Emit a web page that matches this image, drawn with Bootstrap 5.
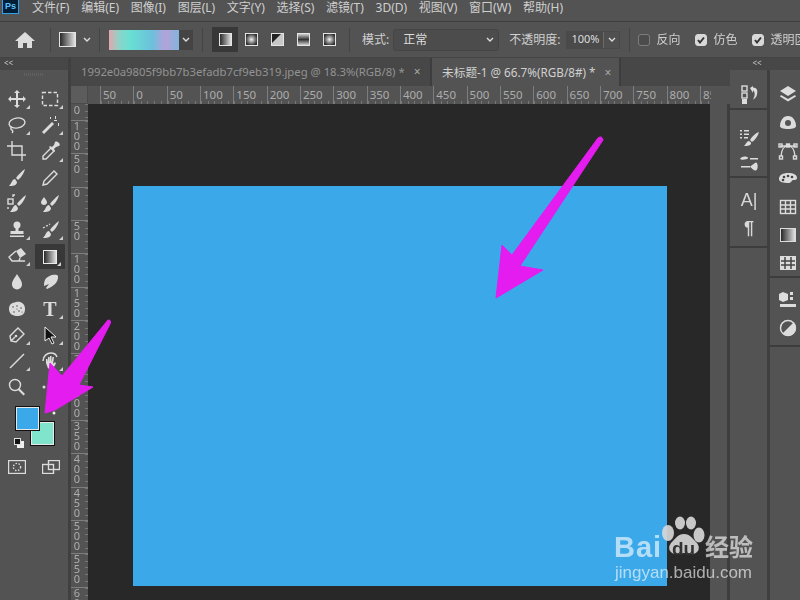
<!DOCTYPE html>
<html lang="zh-CN">
<head>
    <meta charset="UTF-8">
    <meta name="viewport" content="width=device-width, initial-scale=1.0">
    <title>Photoshop</title>
    <link rel="stylesheet" href="https://cdn.jsdelivr.net/npm/bootstrap@5.3.0/dist/css/bootstrap.min.css">
    <style>
        html, body { width: 800px; height: 600px; overflow: hidden; }
        body { background: #535353; color: #cfcfcf; font-family: "Noto Sans", "Noto Sans CJK SC", sans-serif; font-size: 12px; }
        .ps-app { position: relative; width: 800px; height: 600px; overflow: hidden; filter: blur(.4px); }

        /* menu bar */
        .ps-menu { height: 22px; flex: none; background: #535353; border-bottom: 1px solid #3d3d3d; padding-bottom: 5px; }
        .ps-logo { width: 17px; height: 14px; margin: 0 13px 2px 2px; align-self: flex-start; background: #001e36; border: 1px solid #2f9fe8; border-top: 0; color: #5cc0ff; font: bold 9px/12px "Liberation Sans", sans-serif; text-align: center; }
        .ps-menu a { color: #cfcfcf; text-decoration: none; font-size: 12px; line-height: 14px; margin-right: 11.7px; white-space: nowrap; }

        /* options bar */
        .ps-options { height: 36px; flex: none; background: #535353; border-bottom: 1px solid #444; white-space: nowrap; }
        .ps-options > * { flex: none; }
        .sp-4 { margin-left: 4px; }
        .sp-6 { margin-left: 6px; }
        .sp-7 { margin-left: 7px; }
        .sp-8 { margin-left: 8px; }
        .sp-9 { margin-left: 9px; }
        .sp-10 { margin-left: 10px; }
        .sp-12 { margin-left: 12px; }
        .sp-15 { margin-left: 15px; }
        .opt-sep { width: 1px; height: 24px; background: #444; }
        .opt-btn { width: 26px; height: 25px; }
        .opt-btn.active { background: #383838; }
        .gradient-pick { width: 70px; height: 20px; background: linear-gradient(90deg, #e2a8ae 0, #8cd4c8 15%, #68e0d2 30%, #6cc0dc 62%, #b4a2da 80%, #82b4dc 100%); }
        .gradient-drop { width: 14px; height: 20px; background: #444; }
        .opt-select { width: 106px; height: 22px; border: 1px solid #454545; border-radius: 3px; background: #4c4c4c; padding-left: 9px; color: #ddd; }
        .opt-input { width: 54px; height: 18px; border: 1px solid #4a4a4a; background: #4a4a4a; color: #ddd; font-size: 11px; }
        .opt-input-drop { width: 16px; height: 16px; border-left: 1px solid #6a6a6a; background: #505050; }
        .opt-check { width: 12px; height: 12px; margin-top: 0; border: 1px solid #7c7c7c; background-color: #4c4c4c; border-radius: 2px; }
        .opt-check:checked { background-color: #d8d8d8; border-color: #d8d8d8; background-image: url("data:image/svg+xml,%3csvg xmlns='http://www.w3.org/2000/svg' viewBox='0 0 20 20'%3e%3cpath fill='none' stroke='%23333' stroke-width='4' d='M4 10l4 5 8-10'/%3e%3c/svg%3e"); }

        /* side panels */
        .side-head { height: 12px; background: #474747; color: #ccc; font-size: 8px; line-height: 10px; }
        .ps-grip { height: 3px; width: 20px; margin: 3px auto 0; background: repeating-linear-gradient(90deg, #606060 0 1px, transparent 1px 2px); }
        .ps-tools { width: 71px; flex: none; background: #535353; border-right: 3px solid #404040; }
        .tool-grid { display: grid; grid-template-columns: 33.5px 33.5px; grid-auto-rows: 26.2px; padding-top: 10px; }
        .tool-cell { position: relative; display: flex; align-items: center; justify-content: center; }
        .tool-cell.active { background: #383838; border-radius: 1px; margin: 1px 2px 0 1px; }
        .tool-cell.fly::after { content: ""; position: absolute; right: 4px; bottom: 3px; border: 2px solid transparent; border-right-color: #cfcfcf; border-bottom-color: #cfcfcf; }
        .tool-svg { width: 20px; height: 20px; fill: #dcdcdc; stroke: none; }
        .line-ic { fill: none; stroke: #dcdcdc; stroke-width: 1.4; }
        .swatch-area { height: 54px; margin-top: 6px; position: relative; }
        .swatch { position: absolute; border: 1px solid #111; outline: 1px solid #e8e8e8; outline-offset: -2px; }
        .swatch-fg { left: 15px; top: 0; width: 25px; height: 25px; background: #3ba8e9; z-index: 1; }
        .swatch-bg { left: 30px; top: 15px; width: 25px; height: 25px; background: #80e4cd; }
        .mini-fg, .mini-bg { position: absolute; width: 7px; height: 7px; }
        .mini-bg { left: 17px; top: 35px; background: #eee; }
        .mini-fg { left: 14px; top: 32px; background: #111; border: 1px solid #ddd; }

        /* document */
        .ps-doc { width: 659px; flex: none; }
        .doc-tabs { height: 28px; background: #474747; flex-wrap: nowrap; padding-left: 0; }
        .doc-tabs .nav-link { color: #939393; font-size: 11.3px; height: 28px; line-height: 16px; padding: 6px 0 0 10px; white-space: nowrap; border-right: 2px solid #3d3d3d; }
        .doc-tabs .nav-link.active { color: #d0d0d0; background: #535353; font-size: 11.7px; }
        .tab-one { width: 361px; }
        .tab-two { width: 189px; }
        .tab-x { color: #a8a8a8; margin-left: 9px; font-size: 12px; }
        .ruler-h { height: 18px; width: 640px; background: #535353; overflow: hidden; }
        .ruler-corner { width: 17px; flex: none; background: #5c5c5c; border-right: 1px solid #4a4a4a; border-bottom: 1px solid #4a4a4a; }
        .ruler-lead { width: 12px; flex: none; }
        .tick-h { width: 33.33px; flex: none; border-left: 1px solid #7d7d7d; padding-left: 2px; font-size: 11.5px; line-height: 18px; color: #acacac; background: repeating-linear-gradient(90deg, #777 0 1px, transparent 1px 6.667px) bottom left / 100% 3px no-repeat; }
        .ruler-v { width: 17px; height: 496px; flex: none; background: #535353; overflow: hidden; }
        .tick-v { height: 33.33px; border-top: 1px solid #7d7d7d; padding-left: 1px; font-size: 11px; line-height: 10px; color: #acacac; width: 17px; background: repeating-linear-gradient(180deg, #777 0 1px, transparent 1px 6.667px) top right / 3px 100% no-repeat; }
        .tick-v span { display: block; width: 10px; text-align: center; word-break: break-all; }
        .tick-first { height: 16px; border-top: 0; padding-top: 1px; }
        .doc-canvas { width: 622px; height: 496px; background: #282828; padding: 82px 0 0 45px; flex: none; }
        .art-board { width: 534px; height: 400px; background: #3ba8e9; }
        .doc-scroll { width: 20px; flex: none; border-right: 3px solid #3d3d3d; }

        /* dock */
        .ps-dock { width: 70px; flex: none; }
        .dock-col1 { width: 40px; flex: none; border-right: 3px solid #3f3f3f; min-height: 530px; }
        .dock-col2 { width: 30px; flex: none; min-height: 530px; }
        .dock-group { border-bottom: 2px solid #3d3d3d; padding-top: 11px; }
        .dock-group.tight { padding-top: 8px; }
        .dock-item { display: flex; align-items: center; justify-content: center; height: 28px; padding-left: 1px; }
        .dock-col2 .dock-item { padding-left: 6px; }
        .dock-glyph { font: 18px/20px "Liberation Sans", sans-serif; color: #d8d8d8; }

        /* overlays */
        .arrow-layer { position: absolute; left: 0; top: 0; width: 800px; height: 600px; pointer-events: none; }
        .wm { position: absolute; left: 614px; top: 515px; width: 160px; height: 70px; pointer-events: none; color: rgba(255, 255, 255, .62); }
        .wm-bai { position: absolute; left: 0; top: 14px; font: bold 29px/36px "Liberation Sans", sans-serif; letter-spacing: 1px; }
        .wm-du { position: absolute; left: 58px; top: 22px; font: bold 19px/24px "Liberation Sans", sans-serif; color: #333; }
        .wm-jing { position: absolute; left: 91px; top: 16px; font: bold 24px/30px "Noto Sans CJK SC", sans-serif; }
        .wm-url { position: absolute; left: 1px; top: 48px; font: 17px/20px "Liberation Sans", sans-serif; }
    </style>
</head>
<body>
<div class="ps-app d-flex flex-column">

    <!-- menu bar -->
    <div class="ps-menu d-flex align-items-center">
        <div class="ps-logo">Ps</div>
        <a href="#">文件(F)</a><a href="#">编辑(E)</a><a href="#">图像(I)</a><a href="#">图层(L)</a><a href="#">文字(Y)</a><a href="#">选择(S)</a><a href="#">滤镜(T)</a><a href="#">3D(D)</a><a href="#">视图(V)</a><a href="#">窗口(W)</a><a href="#">帮助(H)</a>
    </div>

    <!-- options bar -->
    <div class="ps-options d-flex align-items-center">
        <svg class="tool-svg sp-15" viewBox="0 0 20 20"><path d="M10 2L0 11h3v7h5v-5h4v5h5v-7h3z"/></svg>
        <div class="opt-sep sp-15"></div>
        <svg class="sp-8" width="17" height="15" viewBox="0 0 17 15"><rect x=".5" y=".5" width="16" height="14" fill="url(#gradLr)" stroke="#e4e4e4"/></svg>
        <svg class="sp-7" width="8" height="6" viewBox="0 0 8 6"><path d="M1 1l3 3 3-3" class="line-ic"/></svg>
        <div class="opt-sep sp-8"></div>
        <div class="d-flex sp-9 align-items-center">
            <div class="gradient-pick"></div>
            <div class="gradient-drop d-flex align-items-center justify-content-center"><svg width="8" height="6" viewBox="0 0 8 6"><path d="M1 1l3 3 3-3" class="line-ic"/></svg></div>
        </div>
        <div class="opt-sep sp-9"></div>
        <div class="opt-btn active d-flex align-items-center justify-content-center sp-9"><svg width="13" height="13" viewBox="0 0 13 13"><rect x=".5" y=".5" width="12" height="12" fill="url(#gradLr)" stroke="#e4e4e4"/></svg></div>
        <div class="opt-btn d-flex align-items-center justify-content-center"><svg width="13" height="13" viewBox="0 0 13 13"><rect x=".5" y=".5" width="12" height="12" fill="url(#gradRad)" stroke="#e4e4e4"/></svg></div>
        <div class="opt-btn d-flex align-items-center justify-content-center"><svg width="13" height="13" viewBox="0 0 13 13"><rect x=".5" y=".5" width="12" height="12" fill="#c8c8c8" stroke="#e4e4e4"/><path d="M1 1h9L1 10z" fill="#222"/></svg></div>
        <div class="opt-btn d-flex align-items-center justify-content-center"><svg width="13" height="13" viewBox="0 0 13 13"><rect x=".5" y=".5" width="12" height="12" fill="url(#gradRef)" stroke="#e4e4e4"/></svg></div>
        <div class="opt-btn d-flex align-items-center justify-content-center"><svg width="13" height="13" viewBox="0 0 13 13"><rect x=".5" y=".5" width="12" height="12" fill="url(#gradRad)" stroke="#e4e4e4"/></svg></div>
        <div class="opt-sep sp-7"></div>
        <span class="sp-12">模式:</span>
        <div class="opt-select d-flex align-items-center justify-content-between sp-4"><span>正常</span><svg class="me-1" width="8" height="6" viewBox="0 0 8 6"><path d="M1 1l3 3 3-3" class="line-ic"/></svg></div>
        <span class="sp-10">不透明度:</span>
        <div class="opt-input d-flex align-items-center justify-content-between sp-6"><span class="ps-1">100%</span><div class="opt-input-drop d-flex align-items-center justify-content-center"><svg width="8" height="6" viewBox="0 0 8 6"><path d="M1 1l3 3 3-3" class="line-ic"/></svg></div></div>
        <div class="opt-sep sp-9"></div>
        <input class="form-check-input opt-check sp-8" type="checkbox"><span class="sp-6">反向</span>
        <input class="form-check-input opt-check sp-15" type="checkbox" checked><span class="sp-6">仿色</span>
        <input class="form-check-input opt-check sp-15" type="checkbox" checked><span class="sp-6">透明区域</span>
    </div>

    <div class="d-flex flex-grow-1">

        <!-- tools -->
        <div class="ps-tools">
            <div class="side-head ps-1">&lt;&lt;</div>
            <div class="ps-grip"></div>
            <div class="tool-grid" id="toolGrid"></div>
            <div class="swatch-area">
                <div class="swatch swatch-fg"></div>
                <div class="swatch swatch-bg"></div>
                <div class="mini-bg"></div>
                <div class="mini-fg"></div>
            </div>
            <div class="d-flex">
                <svg class="ms-2" width="18" height="14" viewBox="0 0 18 14"><rect x=".5" y=".5" width="17" height="13" class="line-ic" stroke-width="1"/><circle cx="9" cy="7" r="3.6" class="line-ic" stroke-dasharray="1.5 1.5"/></svg>
                <svg class="ms-3" width="18" height="14" viewBox="0 0 18 14"><rect x=".5" y="4.5" width="11" height="9" class="line-ic"/><rect x="6.5" y=".5" width="11" height="9" fill="#535353" class="line-ic"/></svg>
            </div>
        </div>

        <!-- document -->
        <div class="ps-doc">
            <ul class="nav doc-tabs">
                <li class="nav-item"><a class="nav-link tab-one" href="#">1992e0a9805f9bb7b3efadb7cf9eb319.jpeg @ 18.3%(RGB/8) *<span class="tab-x">×</span></a></li>
                <li class="nav-item"><a class="nav-link tab-two active" href="#">未标题-1 @ 66.7%(RGB/8#) *<span class="tab-x">×</span></a></li>
            </ul>
            <div class="d-flex ruler-h" id="rulerH"><div class="ruler-corner"></div><div class="ruler-lead"></div></div>
            <div class="d-flex">
                <div class="ruler-v" id="rulerV"></div>
                <div class="doc-canvas"><div class="art-board"></div></div>
                <div class="doc-scroll"></div>
            </div>
        </div>

        <!-- dock -->
        <div class="ps-dock">
            <div class="side-head text-center pe-3">&lt;&lt;</div>
            <div class="d-flex">
                <div class="dock-col1">
                    <div class="dock-group" style="height:40px">
                        <div class="dock-item"><svg class="tool-svg" viewBox="0 0 20 20"><rect x="3" y="1" width="5" height="5" class="line-ic"/><rect x="3" y="8" width="5" height="5" class="line-ic"/><rect x="3" y="14" width="5" height="5"/><path d="M11 3l3-2v1.500c4 0 5 3 4 7-.5 2.500-2 4-4 5 1.500-3 2.500-6 1-8-.3-.5-.6-.8-1-.9V8z"/></svg></div>
                    </div>
                    <div class="dock-group" style="height:68px">
                        <div class="dock-item pt-1"><svg class="tool-svg" viewBox="0 0 20 20"><path d="M1 3h2v1.500H1zM1 6.500h2V8H1zM1 10h2v1.500H1zM5 3h5v1.500H5zM5 6.500h5V8H5zM5 10h4v1.500H5zM20 5c-3 1-7 4-9 8l2 2c3-2 6-6 7-10zM10 14c-2 0-3 3-5 5 3 0 8-.5 7-3.500z"/></svg></div>
                        <div class="dock-item"><svg class="tool-svg" viewBox="0 0 20 20"><path d="M1 6c1-2 4-3 7-2 2 .5 1 1.500 0 2-3 1-6 1-7 0zM11 5h8v1.500h-8zM2 13h9v1.500H2zM11 13.500c2-1 5-4 6-4 2 0 2.500 7 0 8-2 .5-4-2-6-4z"/></svg></div>
                    </div>
                    <div class="dock-group tight" style="height:70px">
                        <div class="dock-item dock-glyph">A<span class="fw-light">|</span></div>
                        <div class="dock-item dock-glyph fw-bold">¶</div>
                    </div>
                </div>
                <div class="dock-col2">
                    <div class="dock-group" style="height:208px">
                        <div class="dock-item"><svg class="tool-svg" viewBox="0 0 20 20"><path d="M10 1l8 5-8 5-8-5zM3 10l7 4 7-4 1 1.500-8 5-8-5z"/></svg></div>
                        <div class="dock-item"><svg class="tool-svg" viewBox="0 0 20 20"><path d="M10 3c5 0 8 5 8 10 0 2-3 3-8 3s-8-1-8-3c0-5 3-10 8-10z"/><circle cx="10" cy="10" r="3" fill="#555"/></svg></div>
                        <div class="dock-item"><svg class="tool-svg line-ic" viewBox="0 0 20 20"><path d="M3 15C4 6 7 5 10 5s6 1 7 10M2 5h16"/><rect x="1" y="3" width="3" height="3"/><rect x="16" y="3" width="3" height="3"/><rect x="8.500" y="3" width="3" height="3" fill="#dcdcdc"/><rect x="1.500" y="15" width="3" height="3"/><rect x="15.500" y="15" width="3" height="3"/></svg></div>
                        <div class="dock-item"><svg class="tool-svg" viewBox="0 0 20 20"><path d="M10 4c6 0 9 2 9 5 0 2-2 2-4 2-1.500 0-1.500 3-4 3-6 0-10-1-10-4 0-4 4-6 9-6z"/><circle cx="6" cy="8" r="1.300" fill="#444"/><circle cx="10" cy="7" r="1.300" fill="#444"/><circle cx="14" cy="8" r="1.300" fill="#444"/><circle cx="5" cy="11" r="1.300" fill="#444"/></svg></div>
                        <div class="dock-item"><svg class="tool-svg line-ic" viewBox="0 0 20 20"><rect x="2.500" y="3.500" width="15" height="13"/><path d="M2.500 8h15M2.500 12h15M7.500 3.500v13M12.500 3.500v13"/></svg></div>
                        <div class="dock-item"><svg class="tool-svg" viewBox="0 0 20 20"><rect x="2.500" y="3.500" width="15" height="13" fill="url(#gradLr)" stroke="#dcdcdc"/></svg></div>
                        <div class="dock-item"><svg class="tool-svg" viewBox="0 0 20 20"><rect x="2" y="3" width="16" height="14"/><path d="M7 4v12M13 4v12M3 8h14M3 12h14" stroke="#444" stroke-width="1.500"/></svg></div>
                    </div>
                    <div class="dock-group tight" style="height:69px">
                        <div class="dock-item"><svg class="tool-svg" viewBox="0 0 20 20"><path d="M5 2l5 2v6l-5 2-4-2V4zM12 2h3v3h-3zM12 7h3v3h-3zM2 14h16v3H2z"/></svg></div>
                        <div class="dock-item"><svg class="tool-svg" viewBox="0 0 20 20"><circle cx="10" cy="10" r="8"/><path d="M4 16L16 4c-3-3-8-3-11 0-3 3-3 9-1 12z" fill="#535353"/><circle cx="10" cy="10" r="7.500" class="line-ic"/></svg></div>
                    </div>
                </div>
            </div>
        </div>
    </div>

    <!-- pink arrows drawn over the screenshot -->
    <svg class="arrow-layer" viewBox="0 0 800 600">
        <defs>
            <linearGradient id="gradLr"><stop offset="0" stop-color="#222"/><stop offset="1" stop-color="#e8e8e8"/></linearGradient>
            <linearGradient id="gradRef" x2="0" y2="1"><stop offset="0" stop-color="#ddd"/><stop offset=".5" stop-color="#333"/><stop offset="1" stop-color="#ddd"/></linearGradient>
            <radialGradient id="gradRad"><stop offset="0" stop-color="#f0f0f0"/><stop offset="1" stop-color="#333"/></radialGradient>
        </defs>
        <path fill="#e41cf0" stroke="#e41cf0" stroke-linejoin="round" d="M496 298L502 245 512 255 598 138Q602 135 603 140L520 266 543 270z"/>
        <path fill="#e41cf0" stroke="#e41cf0" stroke-linejoin="round" d="M45 413L50 363 62 376 108 320Q112 320 110 324L79 385 93 387 55 410z"/>
        <circle cx="54" cy="413" r="1.500" fill="#eee"/>
    </svg>

    <!-- watermark -->
    <div class="wm">
        <div class="wm-bai">Bai</div>
        <svg class="position-absolute top-0 start-0" width="160" height="50" viewBox="0 0 160 50">
            <g fill="#d8d8d8" fill-opacity=".9">
                <ellipse cx="54" cy="18" rx="6" ry="8"/>
                <ellipse cx="66" cy="8" rx="5" ry="6.500"/>
                <ellipse cx="77" cy="8" rx="5" ry="6.500"/>
                <ellipse cx="85" cy="20" rx="5.500" ry="7.500"/>
                <path d="M70 19c6 0 9 5 13 9 4 5 1 11-5 11-3 0-5-1-8-1s-5 1-8 1c-6 0-9-6-5-11 4-4 7-9 13-9z"/>
            </g>
        </svg>
        <div class="wm-du">du</div>
        <div class="wm-jing">经验</div>
        <div class="wm-url">jingyan.baidu.com</div>
    </div>
</div>

<script>
    const brush = '<path d="M18 1c-3 2-7 6-9 9l2 2c3-2 6-7 7-11zM8 11c-3 0-3 4-6 7 3 0 8 0 8-4z"/>';
    const tools = [
        ['<path d="M10 1l3 3h-2v5h5V7l3 3-3 3v-2h-5v5h2l-3 3-3-3h2v-5H4v2l-3-3 3-3v2h5V4H7z"/>', 1],
        ['<rect x="2.500" y="3.500" width="15" height="13" class="line-ic" stroke-dasharray="3.500 2"/>', 1],
        ['<g class="line-ic"><ellipse cx="10" cy="8" rx="8" ry="5" transform="rotate(-10 10 8)"/><path d="M5 12c-2 1-1 3 0 3s1 2 0 3"/></g>', 1],
        ['<path d="M2 17L12 7l2 2L4 19z"/><path d="M15 1h1v3h-1zM14 5h3v1h-3zM18 8h1v3h-1zM10 2h1v2h-1z"/>', 1],
        ['<path class="line-ic" stroke-width="2" d="M5 0v14h14M0 5h15v15"/>', 0],
        ['<path class="line-ic" d="M11 7L3 15v3h3l8-8z"/><path d="M12 6l2-2 1-3c1-1 3 0 4 1 1 1 1 2 0 3l-3 1-2 2 1 2-1 1-5-5 1-1z"/>', 1],
        [brush, 0],
        ['<path class="line-ic" d="M14 3l3 3L7 16l-4 1 1-4z"/>', 0],
        ['<g transform="translate(1 0)">' + brush + '</g><rect x="1" y="5" width="5" height="5" class="line-ic"/><path class="line-ic" d="M8 1h-2v2M1 13v2"/>', 0],
        ['<g transform="translate(1 0)">' + brush + '</g><path d="M4 3c2 3 3 4 3 5.500S5.500 11 4 11 1 10 1 8.500 2 6 4 3z"/>', 0],
        ['<circle cx="10" cy="5" r="3.500"/><path d="M8.500 8h3v3h5v3h-13v-3h5zM3 15.500h14V17H3z"/>', 1],
        ['<g transform="translate(1 0)">' + brush + '</g><path class="line-ic" stroke-dasharray="2 1.500" d="M3 8l7-4"/>', 1],
        ['<path d="M9 5l5-3 5 6-6 4z"/><path class="line-ic" d="M9 5l-7 6 3 4h7l1-3M5 15h13"/>', 1],
        ['<rect x="3.500" y="3.500" width="13" height="13" fill="url(#gradLr)" stroke="#ececec"/>', 1],
        ['<path d="M10 2c3 5 5 7 5 10.500A5 5 0 0 1 5 12.500C5 9 7 7 10 2z"/>', 0],
        ['<path d="M5 8c2-4 8-6 12-5 2 1 1 5-1 8-3 3-5 4-9 6l-1-1 3-4-5 2c0-2 0-4 1-6z"/>', 0],
        ['<path d="M9 3c4-1 9 1 9 7s-4 7-8 7-8-2-8-7 3-6 7-7z"/><g fill="#555"><circle cx="6" cy="8" r=".8"/><circle cx="10" cy="7" r=".8"/><circle cx="14" cy="9" r=".8"/><circle cx="7" cy="13" r=".8"/><circle cx="12" cy="12" r=".8"/><circle cx="10" cy="10" r=".6"/><circle cx="15" cy="13" r=".6"/></g>', 0],
        ['<text x="10" y="17" text-anchor="middle" font-family="Liberation Serif, serif" font-weight="bold" font-size="20">T</text>', 1],
        ['<path class="line-ic" d="M4 16l-1-5 8-8 6 6-8 8zM4 16l4-4"/><circle cx="9" cy="11" r="1.300"/>', 1],
        ['<path d="M5 2l0 14 4-3 3 6 2-1-3-6 5 0z" fill="#111" stroke="#eee"/>', 1],
        ['<path class="line-ic" d="M3 17L17 3"/>', 1],
        ['<path d="M6 12V8l1.500 0 .5 3V6h1.500v5l.5-6h1.500l0 6 1-5h1.500l-1 7 2-2 1 1.500-3 5H8z"/><path class="line-ic" d="M3 10C3 5 7 2 11 2c3 0 5 1 6 4"/>', 1],
        ['<circle cx="8" cy="8" r="5.500" class="line-ic" stroke-width="1.800"/><path d="M12 11l6 6-1.500 1.500-6-6z"/>', 0],
        ['<circle cx="4" cy="10" r="1.500"/><circle cx="10" cy="10" r="1.500"/><circle cx="16" cy="10" r="1.500"/>', 0]
    ];

    // tool buttons, two columns
    let toolHtml = "";
    tools.forEach((tool, i) => {
        toolHtml += `<div class="tool-cell ${tool[1] ? "fly" : ""} ${i === 13 ? "active" : ""}"><svg class="tool-svg" viewBox="0 0 20 20">${tool[0]}</svg></div>`;
    });
    document.getElementById("toolGrid").innerHTML = toolHtml;

    // horizontal ruler
    let rulerH = "";
    for (let n = -50; n <= 850; n += 50) {
        rulerH += `<div class="tick-h">${Math.abs(n)}</div>`;
    }
    document.getElementById("rulerH").insertAdjacentHTML("beforeend", rulerH);

    // vertical ruler, digits wrap one per line
    let rulerV = `<div class="tick-v tick-first"><span>0</span></div>`;
    for (let n = -100; n <= 600; n += 50) {
        rulerV += `<div class="tick-v"><span>${Math.abs(n)}</span></div>`;
    }
    document.getElementById("rulerV").innerHTML = rulerV;
</script>
<script src="https://cdn.jsdelivr.net/npm/bootstrap@5.3.0/dist/js/bootstrap.bundle.min.js"></script>
</body>
</html>
